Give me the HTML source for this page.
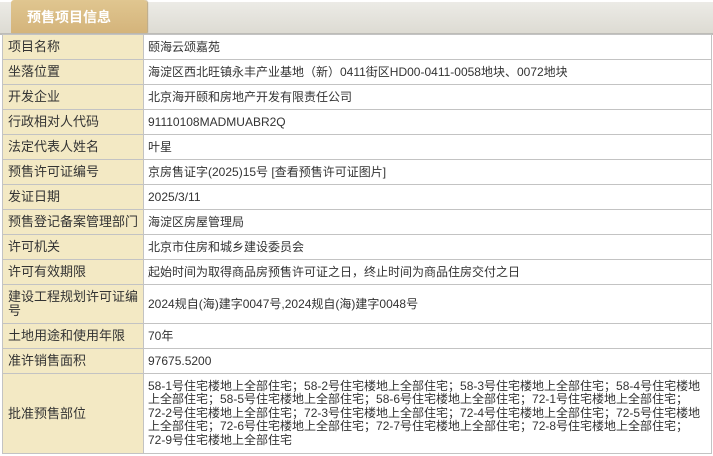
<!DOCTYPE html>
<html><head><meta charset="utf-8">
<style>
body{margin:0;width:713px;height:456px;background:#fff;font-family:"Liberation Sans","Noto Sans CJK SC","WenQuanYi Zen Hei",sans-serif;font-size:12px;color:#333;overflow:hidden;position:relative}
.band{position:absolute;left:0;top:2px;width:713px;height:31px;background:linear-gradient(#ecebe6,#dddbd3);border-bottom:2px solid #bdbcb7}
.tab{position:absolute;left:11px;top:0;width:136px;height:33px;background:linear-gradient(#e0c690,#d4b47b);border-radius:3px 3px 0 0;color:#fff;font-weight:bold;font-size:14px;line-height:34px;padding-left:16px;box-sizing:border-box;box-shadow:1px 0 1px #b9a57e}
table{position:absolute;left:2px;top:34px;border-collapse:collapse;width:710px}
td{border:1px solid #c3c3c3;padding:0 0 0 5px;vertical-align:middle;line-height:14px}
td.l{background:#f3e9c4;width:135px;font-size:13px;color:#333}
td.v{background:#fff;padding-left:4px}
</style></head><body>
<div class="band"></div>
<div class="tab">预售项目信息</div>
<table>
<tr style="height:25px"><td class="l">项目名称</td><td class="v">颐海云颂嘉苑</td></tr>
<tr style="height:25px"><td class="l">坐落位置</td><td class="v">海淀区西北旺镇永丰产业基地（新）0411街区HD00-0411-0058地块、0072地块</td></tr>
<tr style="height:25px"><td class="l">开发企业</td><td class="v">北京海开颐和房地产开发有限责任公司</td></tr>
<tr style="height:25px"><td class="l">行政相对人代码</td><td class="v">91110108MADMUABR2Q</td></tr>
<tr style="height:25px"><td class="l">法定代表人姓名</td><td class="v">叶星</td></tr>
<tr style="height:25px"><td class="l">预售许可证编号</td><td class="v">京房售证字(2025)15号 [查看预售许可证图片]</td></tr>
<tr style="height:25px"><td class="l">发证日期</td><td class="v">2025/3/11</td></tr>
<tr style="height:25px"><td class="l">预售登记备案管理部门</td><td class="v">海淀区房屋管理局</td></tr>
<tr style="height:25px"><td class="l">许可机关</td><td class="v">北京市住房和城乡建设委员会</td></tr>
<tr style="height:25px"><td class="l">许可有效期限</td><td class="v">起始时间为取得商品房预售许可证之日，终止时间为商品住房交付之日</td></tr>
<tr style="height:39px"><td class="l">建设工程规划许可证编<br>号</td><td class="v">2024规自(海)建字0047号,2024规自(海)建字0048号</td></tr>
<tr style="height:25px"><td class="l">土地用途和使用年限</td><td class="v">70年</td></tr>
<tr style="height:25px"><td class="l">准许销售面积</td><td class="v">97675.5200</td></tr>
<tr style="height:80px"><td class="l">批准预售部位</td><td class="v" style="line-height:13.4px">58-1号住宅楼地上全部住宅；58-2号住宅楼地上全部住宅；58-3号住宅楼地上全部住宅；58-4号住宅楼地<br>上全部住宅；58-5号住宅楼地上全部住宅；58-6号住宅楼地上全部住宅；72-1号住宅楼地上全部住宅；<br>72-2号住宅楼地上全部住宅；72-3号住宅楼地上全部住宅；72-4号住宅楼地上全部住宅；72-5号住宅楼地<br>上全部住宅；72-6号住宅楼地上全部住宅；72-7号住宅楼地上全部住宅；72-8号住宅楼地上全部住宅；<br>72-9号住宅楼地上全部住宅</td></tr>
</table>
</body></html>
